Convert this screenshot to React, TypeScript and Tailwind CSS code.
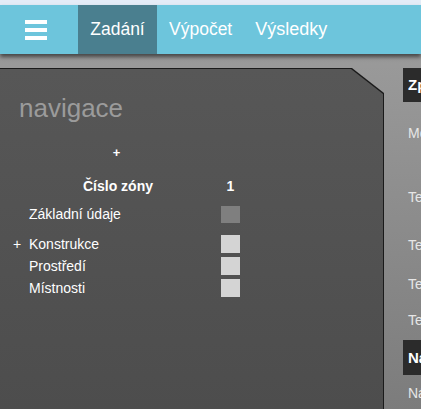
export default function App() {
  const rows = [
    { plus: false, label: 'Konstrukce' },
    { plus: false, label: 'Prostředí' },
    { plus: false, label: 'Místnosti' },
  ];

  return (
    <div className="w-[421px] h-[409px] overflow-hidden bg-[#8f8f8f] font-['Liberation_Sans',Arial,sans-serif] flex flex-col">
      <div className="h-[5px] bg-[#e4ecf7] shrink-0" />
      <header className="h-[49px] shrink-0 bg-[#6dc5dc] flex items-stretch shadow-[0_3px_4px_rgba(0,0,0,0.55)] relative z-10">
        <div className="w-[78px] flex items-center justify-center">
          <div className="flex flex-col gap-[4px] -ml-[6px]">
            <span className="block w-[22px] h-[4px] bg-white" />
            <span className="block w-[22px] h-[4px] bg-white" />
            <span className="block w-[22px] h-[4px] bg-white" />
          </div>
        </div>
        <div className="w-[79px] bg-[#4a7f8f] flex items-center justify-center text-white text-[17.5px]">Zadání</div>
        <div className="pl-[12px] pr-[11px] flex items-center text-white text-[17.5px]">Výpočet</div>
        <div className="px-[12px] flex items-center text-white text-[18px]">Výsledky</div>
      </header>

      <div className="flex-1 flex pt-[14px] bg-gradient-to-b from-[#9a9a9a] to-[#7c7c7c]">
        <div className="w-[384px] shrink-0 bg-[#1a1a1a] [clip-path:polygon(0_0,352px_0,100%_25px,100%_100%,0_100%)] pt-[1px] pr-[1px]">
          <div className="h-full bg-gradient-to-b from-[#575757] to-[#4d4d4d] [clip-path:polygon(0_0,351px_0,100%_25px,100%_100%,0_100%)] pt-[24px]">
            <div className="pl-[19px] text-[26px] leading-[30px] text-[#9b9b9b]">navigace</div>

            <div className="mt-[22px] w-[233px] text-center text-white text-[13px] leading-[16px] font-bold">+</div>

            <div className="mt-[16px] flex items-center h-[18px] text-white text-[14px] font-bold">
              <div className="w-[153px] text-right">Číslo zóny</div>
              <div className="w-[68px]" />
              <div className="w-[19px] text-center">1</div>
            </div>

            <div className="mt-[10px] flex items-center h-[18px] text-white text-[14px]">
              <div className="w-[29px]" />
              <div className="w-[192px]">Základní údaje</div>
              <div className="w-[19px] h-[17px] bg-[#7f7f7f]" />
            </div>

            <div className="mt-[12px] flex flex-col gap-[4px]">
              {rows.map((r, i) => (
                <div key={r.label} className="flex items-center h-[18px] text-white text-[14px]">
                  <div className="w-[29px] pl-[13px] text-[14px]">{i === 0 ? '+' : ''}</div>
                  <div className="w-[192px]">{r.label}</div>
                  <div className="w-[19px] h-[18px] bg-[#d4d4d4]" />
                </div>
              ))}
            </div>
          </div>
        </div>

        <div className="flex-1 pl-[19px] text-[14px] leading-[20px] text-[#e6e6e6]">
          <div className="h-[34px] bg-[#2b2b2b] text-white font-bold text-[15px] pl-[5px] flex items-center whitespace-nowrap overflow-hidden">Zpráva</div>
          <div className="mt-[21px] pl-[5px] whitespace-nowrap">Model</div>
          <div className="mt-[44px] pl-[5px] whitespace-nowrap">Teplota</div>
          <div className="mt-[28px] pl-[5px] whitespace-nowrap">Teplota</div>
          <div className="mt-[19px] pl-[5px] whitespace-nowrap">Teplota</div>
          <div className="mt-[16px] pl-[5px] whitespace-nowrap">Teplota</div>
          <div className="mt-[10px] h-[35px] bg-[#2b2b2b] text-white font-bold text-[15px] pl-[5px] flex items-center whitespace-nowrap overflow-hidden">Nastavení</div>
          <div className="mt-[8px] pl-[5px] whitespace-nowrap">Název</div>
        </div>
      </div>
    </div>
  );
}
